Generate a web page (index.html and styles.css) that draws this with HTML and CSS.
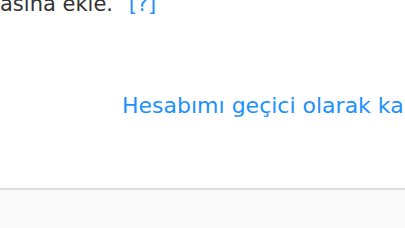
FILE: index.html
```html
<!DOCTYPE html>
<html lang="tr">
<head>
    <meta charset="UTF-8">
    <meta name="viewport" content="width=device-width, initial-scale=1.0">
    <title>Hesap</title>
    <link rel="stylesheet" href="styles.css">
</head>
<body>
    <div class="content">
        <p class="note">asına ekle. <a href="#" class="help">[?]</a></p>
        <div class="action-row">
            <a href="#" class="action">Hesabımı geçici olarak kapat</a>
        </div>
    </div>
    <div class="footer"></div>
</body>
</html>
```

FILE: styles.css
```css
body {
    margin: 0;
    font-family: "DejaVu Sans", Verdana, sans-serif;
    background: #ffffff;
    color: #333;
    overflow: hidden;
}
.content {
    height: 188px;
    overflow: hidden;
}
.note {
    margin: -8px 0 0 0;
    font-size: 21px;
    line-height: 24px;
    white-space: nowrap;
}
.help {
    color: #1e90ff;
    text-decoration: none;
    margin-left: 9px;
}
.action-row {
    margin-top: 78px;
    padding-left: 122px;
    white-space: nowrap;
}
.action {
    color: #1e90ff;
    text-decoration: none;
    font-size: 22px;
    line-height: 24px;
}
.footer {
    height: 40px;
    border-top: 2px solid #dcdcdc;
    background: #f9f9f9;
}
```
